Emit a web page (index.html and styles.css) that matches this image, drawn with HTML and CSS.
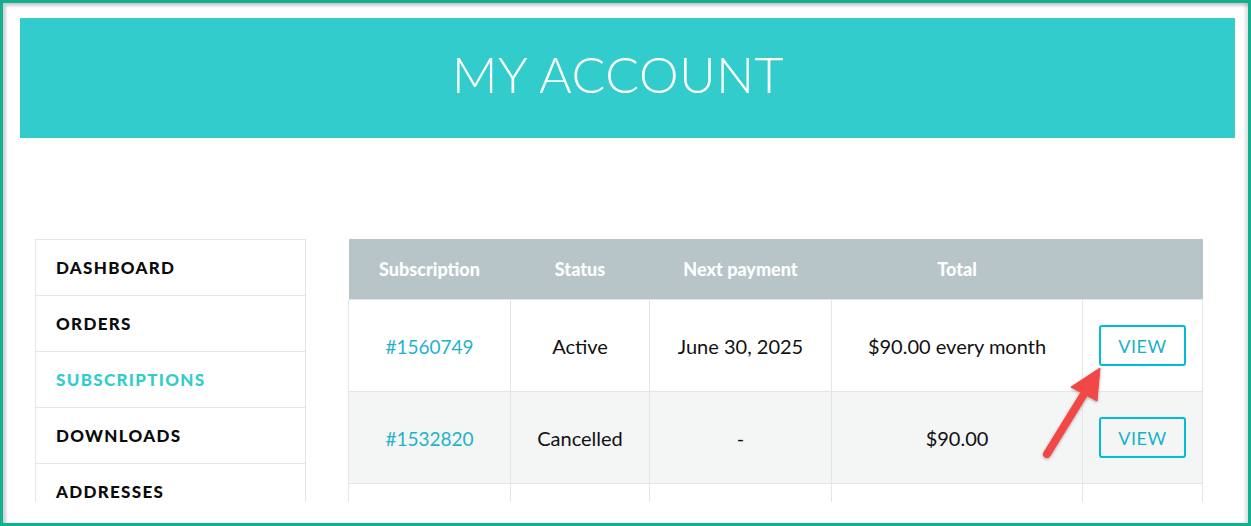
FILE: index.html
```html
<!DOCTYPE html>
<html lang="en">
<head>
<meta charset="utf-8">
<title>My Account</title>
<link rel="stylesheet" href="styles.css">
</head>
<body>
<div class="frame">
  <div class="viewport">
    <header class="banner">
      <h1 class="banner-title">MY ACCOUNT</h1>
    </header>
    <div class="account">
      <nav class="side-nav">
        <a class="nav-item" href="#">DASHBOARD</a>
        <a class="nav-item" href="#">ORDERS</a>
        <a class="nav-item is-active" href="#">SUBSCRIPTIONS</a>
        <a class="nav-item" href="#">DOWNLOADS</a>
        <a class="nav-item" href="#">ADDRESSES</a>
      </nav>
      <div class="table-wrap">
        <table class="subs">
          <colgroup>
            <col class="c1"><col class="c2"><col class="c3"><col class="c4"><col class="c5">
          </colgroup>
          <thead>
            <tr>
              <th>Subscription</th>
              <th>Status</th>
              <th>Next payment</th>
              <th>Total</th>
              <th></th>
            </tr>
          </thead>
          <tbody>
            <tr>
              <td><a class="sub-link" href="#">#1560749</a></td>
              <td>Active</td>
              <td>June 30, 2025</td>
              <td>$90.00 every month</td>
              <td><a class="btn-view" href="#">VIEW</a></td>
            </tr>
            <tr class="alt">
              <td><a class="sub-link" href="#">#1532820</a></td>
              <td>Cancelled</td>
              <td>-</td>
              <td>$90.00</td>
              <td><a class="btn-view" href="#">VIEW</a></td>
            </tr>
            <tr>
              <td></td><td></td><td></td><td></td><td></td>
            </tr>
          </tbody>
        </table>
      </div>
    </div>
  </div>
  <svg class="arrow" width="1251" height="526" viewBox="0 0 1251 526" aria-hidden="true">
    <defs>
      <filter id="sh" x="-20%" y="-20%" width="140%" height="140%">
        <feDropShadow dx="0" dy="1" stdDeviation="1.5" flood-color="#000" flood-opacity="0.35"/>
      </filter>
    </defs>
    <g filter="url(#sh)" fill="#f24646" stroke="#f24646">
      <line x1="1047" y1="454" x2="1084" y2="394" stroke-width="8" stroke-linecap="round"/>
      <polygon points="1100,368 1071,387 1097,401" stroke-width="1" stroke-linejoin="round"/>
    </g>
  </svg>
</div>
</body>
</html>
```

FILE: styles.css
```css
html, body {
  margin: 0;
  padding: 0;
  background: #fff;
}

body {
  font-family: "Lato", "Liberation Sans", sans-serif;
  color: #111;
}

.frame {
  position: relative;
  width: 1251px;
  height: 526px;
  box-sizing: border-box;
  border: 3px solid #13b08f;
  box-shadow: inset 3px 3px 3px rgba(0, 0, 0, 0.18), inset -3px 0 3px rgba(0, 0, 0, 0.12);
  padding: 15px 13px 0 17px;
  overflow: hidden;
}

.viewport {
  height: 484px;
  overflow: hidden;
}

.banner {
  height: 120px;
  background: #33cccc;
  display: flex;
  align-items: center;
  justify-content: center;
}

.banner-title {
  margin: -8px 0 0 0;
  padding-right: 19px;
  font-family: "Lato", sans-serif;
  font-weight: 300;
  font-size: 50px;
  letter-spacing: 0.6px;
  color: #fff;
  line-height: 1;
}

.account {
  display: flex;
  align-items: flex-start;
  gap: 42px;
  margin-top: 101px;
  padding-left: 15px;
}

.side-nav {
  flex: none;
  width: 271px;
  height: 300px;
  box-sizing: border-box;
  border: 1px solid #e3e5e8;
  display: flex;
  flex-direction: column;
}

.nav-item {
  flex: none;
  display: flex;
  align-items: center;
  height: 55px;
  padding-left: 20px;
  border-top: 1px solid #e3e5e8;
  font-weight: 900;
  font-size: 17px;
  letter-spacing: 1.3px;
  color: #0b0b0b;
  text-decoration: none;
}

.nav-item:first-child {
  border-top: none;
}

.nav-item.is-active {
  color: #33cccc;
}

.table-wrap {
  flex: none;
  width: 854px;
}

.subs {
  width: 854px;
  table-layout: fixed;
  border-collapse: collapse;
}

.c1 { width: 162px; }
.c2 { width: 139px; }
.c3 { width: 182px; }
.c4 { width: 251px; }
.c5 { width: 120px; }

.subs th {
  height: 60px;
  padding: 0;
  background: #b7c5c9;
  color: #fff;
  font-weight: 900;
  font-size: 18px;
  text-align: center;
  border-bottom: 1px solid #e3e5e8;
}

.subs td {
  height: 91px;
  padding: 0;
  text-align: center;
  font-size: 20px;
  color: #111;
  border: 1px solid #e3e5e8;
}

.subs tr.alt td {
  background: #f4f5f5;
}

.sub-link {
  font-size: 19px;
  color: #1fb3cb;
  text-decoration: none;
}

.btn-view {
  display: inline-flex;
  align-items: center;
  justify-content: center;
  width: 87px;
  height: 41px;
  box-sizing: border-box;
  border: 2px solid #00bcd4;
  border-radius: 3px;
  color: #1ab2c9;
  font-size: 18px;
  letter-spacing: 0.6px;
  text-decoration: none;
}

.arrow {
  position: absolute;
  left: -3px;
  top: -3px;
  pointer-events: none;
}
```
